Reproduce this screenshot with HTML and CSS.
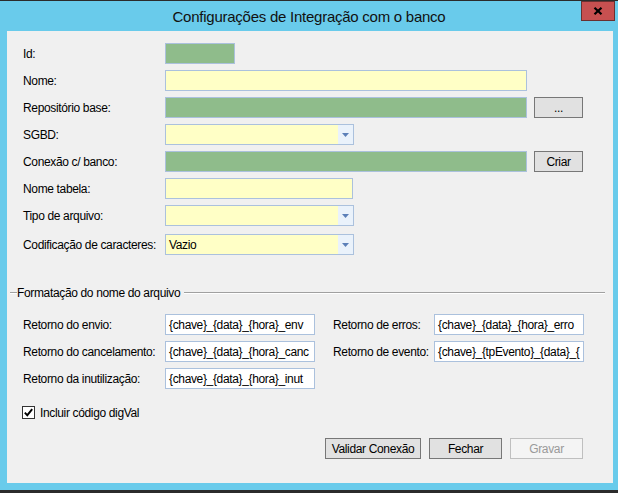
FILE: index.html
```html
<!DOCTYPE html>
<html lang="pt-BR">
<head>
    <meta charset="UTF-8">
    <title>Configurações de Integração com o banco</title>
    <link rel="stylesheet" href="styles.css">
</head>
<body>
    <div class="window">
        <div class="titlebar">
            <span class="title">Configurações de Integração com o banco</span>
            <div class="close">
                <svg width="10" height="8" viewBox="0 0 10 8">
                    <path d="M1.5 0.8 L8.5 7.2 M8.5 0.8 L1.5 7.2" stroke="#000" stroke-width="2.2" fill="none"/>
                </svg>
            </div>
        </div>

        <div class="content">
            <div class="form">
                <div class="row">
                    <span class="lbl">Id:</span>
                    <div class="field green w-id"></div>
                </div>
                <div class="row">
                    <span class="lbl">Nome:</span>
                    <div class="field w-long"></div>
                </div>
                <div class="row">
                    <span class="lbl">Repositório base:</span>
                    <div class="field green w-long"></div>
                    <div class="btn small">...</div>
                </div>
                <div class="row">
                    <span class="lbl">SGBD:</span>
                    <div class="field combo w-combo">
                        <span class="value"></span>
                        <span class="arrow"><svg width="7" height="4" viewBox="0 0 7 4"><path d="M0 0h7L3.5 4z" fill="#5b7fb8"/></svg></span>
                    </div>
                </div>
                <div class="row">
                    <span class="lbl">Conexão c/ banco:</span>
                    <div class="field green w-long"></div>
                    <div class="btn small">Criar</div>
                </div>
                <div class="row">
                    <span class="lbl">Nome tabela:</span>
                    <div class="field w-tab"></div>
                </div>
                <div class="row">
                    <span class="lbl">Tipo de arquivo:</span>
                    <div class="field combo w-combo">
                        <span class="value"></span>
                        <span class="arrow"><svg width="7" height="4" viewBox="0 0 7 4"><path d="M0 0h7L3.5 4z" fill="#5b7fb8"/></svg></span>
                    </div>
                </div>
                <div class="row row-gap">
                    <span class="lbl">Codificação de caracteres:</span>
                    <div class="field combo w-combo">
                        <span class="value">Vazio</span>
                        <span class="arrow"><svg width="7" height="4" viewBox="0 0 7 4"><path d="M0 0h7L3.5 4z" fill="#5b7fb8"/></svg></span>
                    </div>
                </div>
            </div>

            <div class="group-head">
                <span class="line lead"></span>
                <span class="group-title">Formatação do nome do arquivo</span>
                <span class="line rest"></span>
            </div>

            <div class="names">
                <span class="lbl">Retorno do envio:</span>
                <div class="field plain">{chave}_{data}_{hora}_env</div>
                <span class="lbl2">Retorno de erros:</span>
                <div class="field plain">{chave}_{data}_{hora}_erro</div>

                <span class="lbl">Retorno do cancelamento:</span>
                <div class="field plain">{chave}_{data}_{hora}_canc</div>
                <span class="lbl2">Retorno de evento:</span>
                <div class="field plain">{chave}_{tpEvento}_{data}_{</div>

                <span class="lbl">Retorno da inutilização:</span>
                <div class="field plain">{chave}_{data}_{hora}_inut</div>
            </div>

            <label class="check">
                <span class="box">
                    <svg width="11" height="11" viewBox="0 0 11 11"><path d="M1.8 5.6 L4.3 8.2 L9.2 2.2" stroke="#000" stroke-width="1.9" fill="none"/></svg>
                </span>
                Incluir código digVal
            </label>

            <div class="actions">
                <div class="btn wide">Validar Conexão</div>
                <div class="btn">Fechar</div>
                <div class="btn disabled">Gravar</div>
            </div>
        </div>
    </div>
</body>
</html>
```

FILE: styles.css
```css
* {
    margin: 0;
    padding: 0;
    box-sizing: border-box;
}

body {
    width: 618px;
    height: 493px;
    overflow: hidden;
    background: #2b2b2b;
    font-family: 'Liberation Sans', Arial, sans-serif;
    font-size: 12px;
    letter-spacing: -0.35px;
    color: #000;
}

.window {
    position: relative;
    width: 618px;
    height: 493px;
    display: flex;
    flex-direction: column;
    background: #69cbeb;
    border-top: 1px solid #2b2b2b;
    border-bottom: 3px solid #2b2b2b;
}

.titlebar {
    height: 30px;
    display: flex;
    align-items: center;
    justify-content: center;
    font-size: 15px;
    letter-spacing: -0.25px;
    color: #111;
    padding-top: 1px;
}

.close {
    position: absolute;
    top: 0;
    right: 3px;
    width: 34px;
    height: 20px;
    background: #c75050;
    border: 1px solid #6a3030;
    display: flex;
    align-items: center;
    justify-content: center;
}

.content {
    height: 452px;
    margin: 0 5px 0 7px;
    background: #f0f0f0;
    padding: 12px 0 0 16px;
}

.row {
    display: flex;
    align-items: center;
    height: 21px;
    margin-bottom: 6px;
}

.row-gap {
    margin-top: 8px;
}

.lbl {
    width: 142px;
    flex-shrink: 0;
}

.field {
    height: 21px;
    border: 1px solid #abc1dd;
    background: #ffffc6;
    padding: 0 3px;
    display: flex;
    align-items: center;
    white-space: nowrap;
    overflow: hidden;
}

.green {
    background: #8fbc8b;
}

.plain {
    background: #fff;
    width: 150px;
    height: 21px;
}

.w-id { width: 70px; }
.w-long { width: 362px; }
.w-combo { width: 189px; }
.w-tab { width: 188px; }

.combo {
    padding: 0;
}

.combo .value {
    flex: 1;
    padding-left: 3px;
}

.combo .arrow {
    width: 15px;
    height: 100%;
    background: #eaf2fb;
    display: flex;
    align-items: center;
    justify-content: center;
}

.btn {
    height: 21px;
    width: 73px;
    background: #e1e1e1;
    border: 1px solid #777;
    display: flex;
    align-items: center;
    justify-content: center;
}

.btn.small {
    width: 49px;
    margin-left: 7px;
}

.btn.wide {
    width: 96px;
}

.btn.disabled {
    background: #f4f4f4;
    border-color: #bfbfbf;
    color: #9a9a9a;
}

.group-head {
    display: flex;
    align-items: center;
    height: 16px;
    margin-top: 30px;
    margin-left: -13px;
    margin-right: 8px;
}

.line {
    height: 2px;
    border-top: 1px solid #a0a0a0;
    border-bottom: 1px solid #fff;
}

.line.lead {
    width: 7px;
}

.line.rest {
    flex: 1;
    margin-left: 4px;
}

.names {
    display: grid;
    grid-template-columns: 142px 168px 101px 150px;
    grid-auto-rows: 21px;
    row-gap: 6px;
    align-items: center;
    margin-top: 13px;
}

.check {
    display: flex;
    align-items: center;
    gap: 5px;
    margin-top: 17px;
    margin-left: -1px;
    height: 13px;
}

.box {
    width: 13px;
    height: 13px;
    background: #fff;
    border: 1px solid #333;
    display: flex;
    align-items: center;
    justify-content: center;
}

.actions {
    display: flex;
    justify-content: flex-end;
    gap: 8px;
    margin-top: 19px;
    margin-right: 30px;
}
```
